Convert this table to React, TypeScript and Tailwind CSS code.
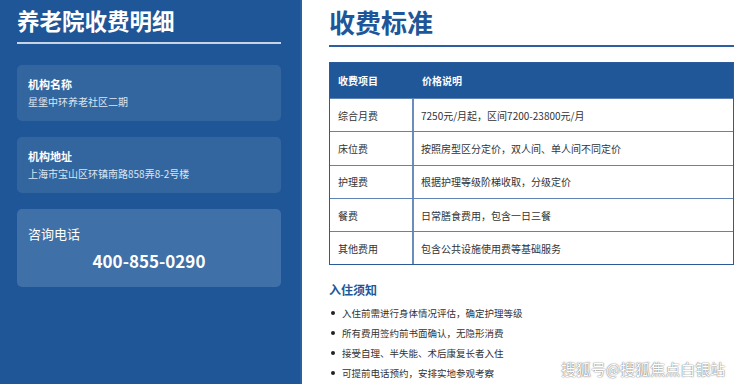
import React from "react";

const fees = [
  { item: "综合月费", desc: "7250元/月起，区间7200-23800元/月" },
  { item: "床位费", desc: "按照房型区分定价，双人间、单人间不同定价" },
  { item: "护理费", desc: "根据护理等级阶梯收取，分级定价" },
  { item: "餐费", desc: "日常膳食费用，包含一日三餐" },
  { item: "其他费用", desc: "包含公共设施使用费等基础服务" },
];

const notes = [
  "入住前需进行身体情况评估，确定护理等级",
  "所有费用签约前书面确认，无隐形消费",
  "接受自理、半失能、术后康复长者入住",
  "可提前电话预约，安排实地参观考察",
];

const font = "font-['Noto_Sans_CJK_SC','Noto_Sans',sans-serif]";

const InfoCard = ({ label, value }: { label: string; value: string }) => (
  <div className="rounded-[5px] bg-[#33669f] px-[11px] pt-[10px] pb-[11px]">
    <div className="text-[11px] leading-[18px] font-bold text-white">{label}</div>
    <div className="mt-[1px] text-[10px] leading-[16px] text-[#dde5f0]">{value}</div>
  </div>
);

export default function App() {
  return (
    <div className={`relative flex h-[384px] w-[740px] overflow-hidden bg-white ${font}`}>
      {/* left panel */}
      <div className="h-full w-[302px] shrink-0 border-r-2 border-[#2a60a0] bg-[#1f5698] pl-[17px] pr-[19px] pt-[4px]">
        <h1 className="text-[22.5px] leading-[32px] font-bold text-white">养老院收费明细</h1>
        <div className="mt-[6px] h-[2px] bg-[#c8d3e4]" />
        <div className="mt-[21px] flex flex-col gap-[16px]">
          <InfoCard label="机构名称" value="星堡中环养老社区二期" />
          <InfoCard label="机构地址" value="上海市宝山区环镇南路858弄8-2号楼" />
          <div className="rounded-[5px] bg-[#4070a8] px-[11px] pt-[15px] pb-[14px]">
            <div className="text-[13px] leading-[20px] text-white">咨询电话</div>
            <div className="mt-[5px] text-center text-[17px] leading-[24px] font-bold text-white">
              400-855-0290
            </div>
          </div>
        </div>
      </div>

      {/* right panel */}
      <div className="flex-1 pl-[27px] pr-[6px] pt-[5px]">
        <h2 className="text-[26px] leading-[34px] font-bold text-[#1e5799]">收费标准</h2>
        <div className="mt-[6px] h-[2px] bg-[#2d5fa0]" />

        <div className="mt-[15px] border border-[#2c5b9b]">
          <div className="flex h-[35px] items-center bg-[#1f5799] text-[10px] font-bold text-white">
            <div className="w-[84px] pl-[8px]">收费项目</div>
            <div className="pl-[8px]">价格说明</div>
          </div>
          {fees.map((f) => (
            <div
              key={f.item}
              className="flex h-[33.3px] border-t border-[#5f83b4] text-[10px] text-[#333]"
            >
              <div className="flex w-[84px] items-center border-r-2 border-[#6b8dbb] pl-[8px]">
                {f.item}
              </div>
              <div className="flex items-center pl-[7px]">{f.desc}</div>
            </div>
          ))}
        </div>

        <h3 className="mt-[16px] text-[12px] leading-[18px] font-bold text-[#1e5799]">入住须知</h3>
        <ul className="mt-[4px] flex flex-col">
          {notes.map((n) => (
            <li key={n} className="flex h-[20px] items-center text-[9.5px] text-[#333]">
              <span className="ml-[2px] mr-[7px] h-[4px] w-[4px] rounded-full bg-[#222]" />
              {n}
            </li>
          ))}
        </ul>
      </div>

      <div className="absolute left-[561px] top-[359px] text-[15px] leading-[20px] text-white [text-shadow:0_0_1px_rgba(0,0,0,0.6),0_0_2px_rgba(0,0,0,0.35)]">
        搜狐号@搜狐焦点白银站
      </div>
    </div>
  );
}
